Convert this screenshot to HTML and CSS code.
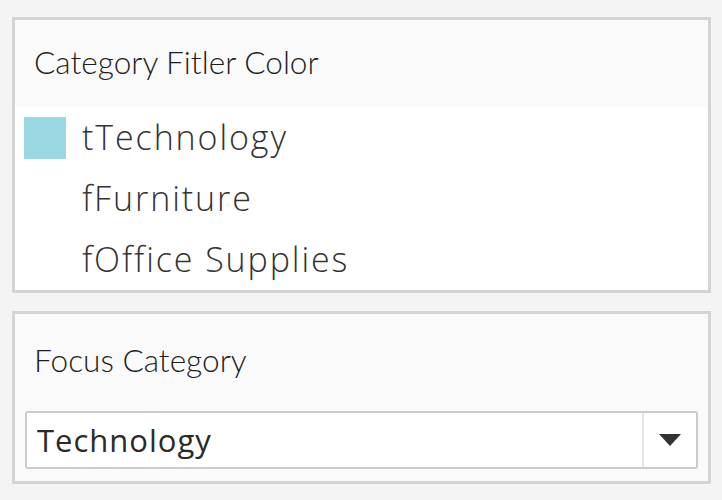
FILE: index.html
```html
<!DOCTYPE html>
<html lang="en">
<head>
    <meta charset="UTF-8">
    <title>Filters</title>
    <link rel="stylesheet" href="styles.css">
</head>
<body>
    <div class="panel">
        <div class="panel-title">Category Fitler Color</div>
        <div class="legend">
            <div class="legend-row">
                <span class="swatch swatch-tech"></span>
                <span class="legend-label">tTechnology</span>
            </div>
            <div class="legend-row">
                <span class="swatch"></span>
                <span class="legend-label">fFurniture</span>
            </div>
            <div class="legend-row">
                <span class="swatch"></span>
                <span class="legend-label">fOffice Supplies</span>
            </div>
        </div>
    </div>

    <div class="panel panel-focus">
        <div class="panel-title focus-title">Focus Category</div>
        <div class="dropdown">
            <div class="dropdown-value">Technology</div>
            <div class="dropdown-btn">
                <svg width="22" height="12" viewBox="0 0 22 12">
                    <polygon points="0,0 22,0 11,12" fill="#333"/>
                </svg>
            </div>
        </div>
    </div>
</body>
</html>
```

FILE: styles.css
```css
body {
    margin: 0;
    padding: 17px 11px 0 12px;
    background: #f4f4f4;
    font-family: Lato, "Open Sans", sans-serif;
    color: #333;
}

.panel {
    border: 3px solid #d4d4d4;
    background: #fafafa;
    width: 693px;
}

.panel-title {
    height: 87px;
    display: flex;
    align-items: center;
    padding-left: 19px;
    padding-bottom: 4px;
    box-sizing: border-box;
    font-size: 31.6px;
    font-weight: 300;
    color: #1e1e1e;
}

.legend {
    background: white;
}

.legend-row {
    display: flex;
    align-items: center;
    height: 61px;
}

.swatch {
    width: 42px;
    height: 42px;
    margin-left: 9px;
    margin-right: 16px;
}

.swatch-tech {
    background: #9ad8e4;
}

.legend-label {
    font-family: "Open Sans", sans-serif;
    font-size: 34px;
    font-weight: 300;
    letter-spacing: 1.9px;
    color: #333;
    padding-bottom: 2px;
}

.panel-focus {
    margin-top: 18px;
    padding: 0 10px 12px 10px;
    width: 673px;
}

.focus-title {
    height: 97px;
    padding-left: 9px;
    padding-bottom: 6px;
}

.dropdown {
    display: flex;
    height: 58px;
    border: 2px solid #cccccc;
    border-radius: 3px;
    background: white;
    box-sizing: border-box;
}

.dropdown-value {
    flex: 1;
    display: flex;
    align-items: center;
    padding-left: 10px;
    font-family: "Open Sans", sans-serif;
    font-size: 31px;
    letter-spacing: 1px;
    color: #2a2a2a;
}

.dropdown-btn {
    width: 52px;
    border-left: 2px solid #e6e6e6;
    display: flex;
    align-items: center;
    justify-content: center;
}
```
